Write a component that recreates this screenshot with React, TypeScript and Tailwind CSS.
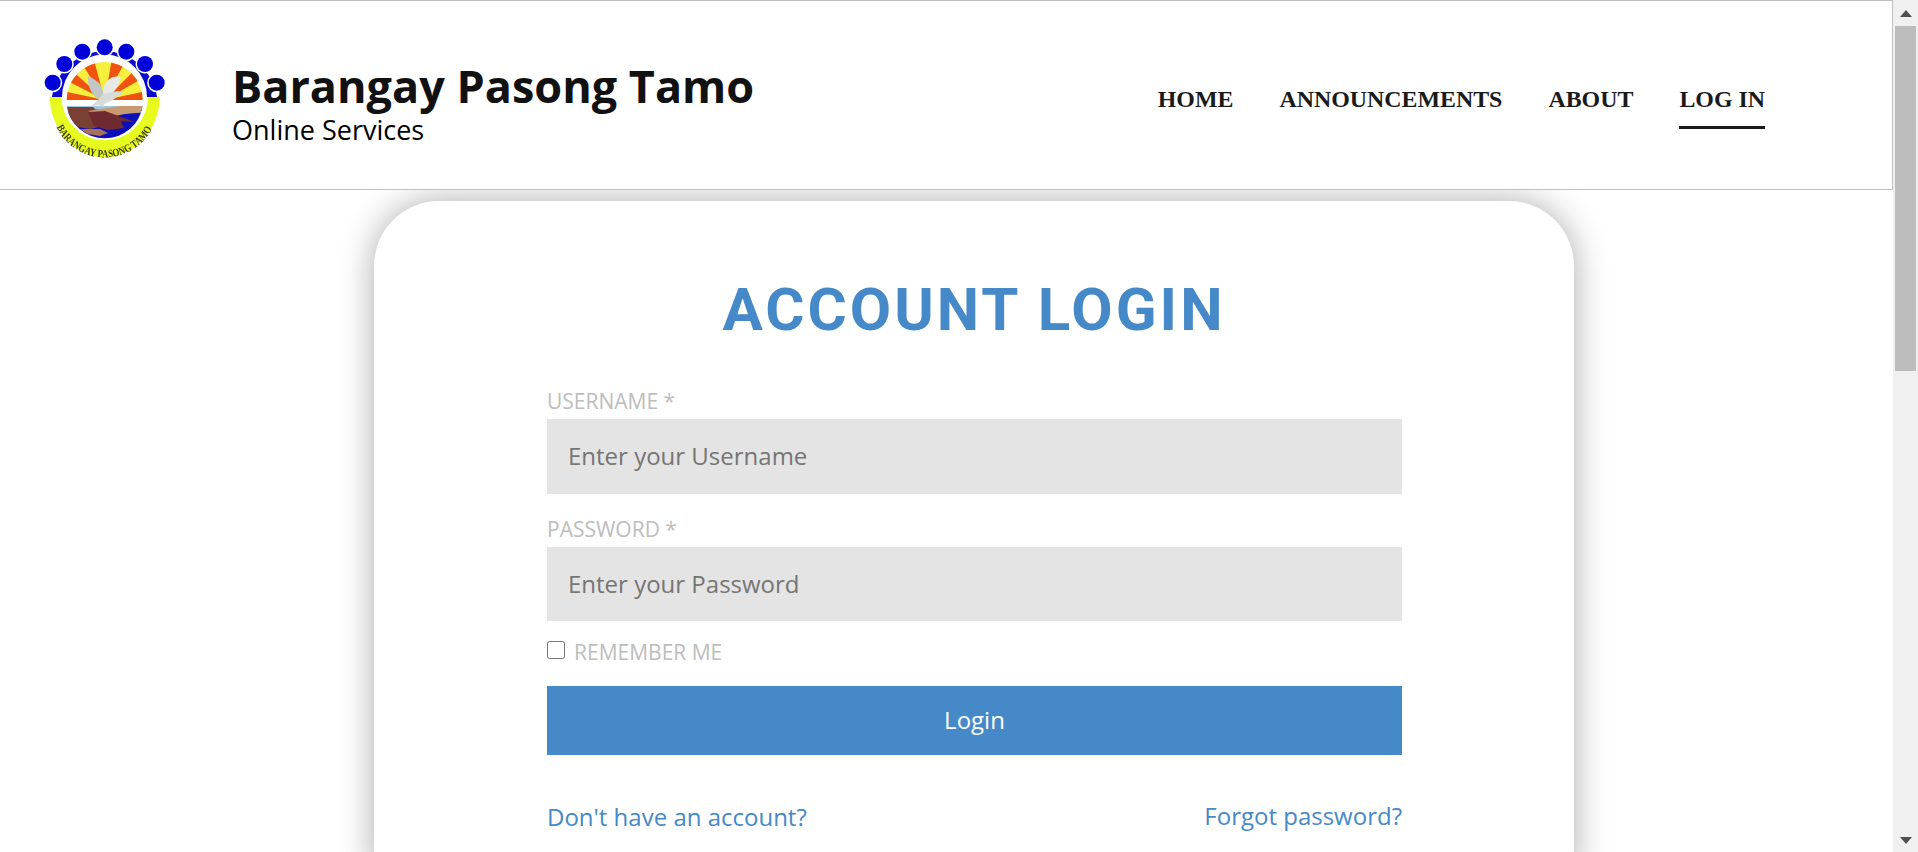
const navItems = ["HOME", "ANNOUNCEMENTS", "ABOUT", "LOG IN"];

// orange wedges of the sunburst, degrees measured from the left horizon
const wedges = [
  [0, 12],
  [27, 42],
  [58, 75],
  [100, 118],
  [135, 150],
  [168, 180],
];

function wedgePath(from: number, to: number) {
  const point = (deg: number) => {
    const rad = (deg * Math.PI) / 180;
    return `${104.7 - 50 * Math.cos(rad)} ${100 - 50 * Math.sin(rad)}`;
  };
  return `M104.7 100 L${point(from)} L${point(to)} Z`;
}

function Logo() {
  const balls = [
    [52.7, 82.7],
    [64.3, 64],
    [82.3, 51.7],
    [104.7, 47.3],
    [126.3, 51.7],
    [145, 64],
    [156.7, 82.7],
  ];
  return (
    <svg viewBox="40 36 130 130" className="mt-[12px] h-[130px] w-[130px] shrink-0 blur-[0.4px]">
      <defs>
        <clipPath id="logo-top">
          <path d="M66.7 100 A38 38 0 0 1 142.7 100 Z" />
        </clipPath>
        <clipPath id="logo-bottom">
          <path d="M67 106 H142.4 A38 37 0 0 1 67 106 Z" />
        </clipPath>
        <path id="logo-arc" d="M56.5 127 A53.5 53.5 0 0 0 153 127" />
      </defs>
      <path d="M52 97 A53 53 0 0 1 157 97 L147 97 A42 42 0 0 0 62 97 Z" fill="#0b0bd0" />
      {balls.map(([cx, cy]) => (
        <circle key={cx} cx={cx} cy={cy} r="9.5" fill="#fff" />
      ))}
      {balls.map(([cx, cy]) => (
        <circle key={cx} cx={cx} cy={cy} r="8" fill="#0000d8" />
      ))}
      <path d="M49.5 97 L61.5 97 A43 43 0 0 0 148 97 L160 97 A55.3 63 0 0 1 49.5 97 Z" fill="#e8fb1e" />
      <g clipPath="url(#logo-top)">
        <rect x="60" y="60" width="90" height="42" fill="#f6ef3c" />
        {wedges.map(([from, to]) => (
          <path key={from} d={wedgePath(from, to)} fill="#f0530f" />
        ))}
      </g>
      <g clipPath="url(#logo-bottom)">
        <rect x="60" y="106" width="90" height="40" fill="#0d10b8" />
        <rect x="60" y="106" width="90" height="3" fill="#9cc8e8" />
        <rect x="60" y="109" width="90" height="4" fill="#4a80cc" />
        <path d="M60 107 L93 107 L100 114 L104 126 L90 129 L78 127 L66 118 Z" fill="#7a4034" />
        <path d="M146 106 L120 106 L100 109 L88 111 L105 118 L125 114 L146 112 Z" fill="#c99a72" />
        <path d="M88 112 L105 111 L135 122 L121 121 L124 128 L108 130 L94 126 Z" fill="#6e2a30" />
        <path d="M80 129 L100 129 L108 133 L100 136 L88 134 Z" fill="#a8705c" />
      </g>
      <path d="M88 77 C90 76 95 80 100 84 L105 96 L97 99 C92 94 87 86 88 77 Z" fill="#c2c7c5" />
      <path d="M121 77 C114 75 108 78 104 86 L103 96 L110 95 C116 90 120 84 121 77 Z" fill="#e8eae8" />
      <path d="M90 107 L98 100 L103 94 L112 92 L118 91 L124 93 L118 96 C112 101 107 103 104 104 L104 107 L98 105 Z" fill="#d8dbd8" />
      <text fontFamily="'Liberation Serif', serif" fontWeight="700" fontSize="11" fill="#3b3b10">
        <textPath href="#logo-arc" textLength="118" lengthAdjust="spacingAndGlyphs">
          BARANGAY PASONG TAMO
        </textPath>
      </text>
    </svg>
  );
}

function Header() {
  return (
    <header className="relative z-10 flex h-[190px] shrink-0 items-center border-t border-r border-b border-[#c0c0c0] bg-white pr-[127px] pl-[40px]">
      <Logo />
      <div className="ml-[62px] flex-1 pt-[18px] font-['Open_Sans',sans-serif] text-[#111]">
        <h1 className="text-[45px] leading-[51px] font-bold">Barangay Pasong Tamo</h1>
        <p className="text-[27px] leading-[37px] text-black">Online Services</p>
      </div>
      <nav className="flex gap-[46px] self-start pt-[82px] font-['Liberation_Serif',serif] text-[23.9px] leading-[32px] font-bold text-[#1a1a1a]">
        {navItems.map((item) => (
          <a
            key={item}
            href="#"
            className={item === "LOG IN" ? "border-b-[3px] border-[#1a1a1a] pb-[11px]" : "pb-[14px]"}
          >
            {item}
          </a>
        ))}
      </nav>
    </header>
  );
}

function LoginCard() {
  return (
    <section className="mt-[11px] ml-[374px] w-[1200px] shrink-0 rounded-t-[65px] bg-white pt-[69px] pb-[40px] font-['Open_Sans',sans-serif] shadow-[0_0_35px_rgba(0,0,0,0.33)]">
      <h2 className="text-center font-['Roboto',sans-serif] text-[60px] leading-[80px] font-bold tracking-[3px] text-[#4689c8]">
        ACCOUNT LOGIN
      </h2>
      <form className="mt-[33px] ml-[173px] flex w-[855px] flex-col">
        <label className="text-[21px] leading-[36px] text-[#bdbdbd]">USERNAME *</label>
        <input
          type="text"
          placeholder="Enter your Username"
          className="h-[75px] bg-[#e4e4e4] px-[21px] pb-[2px] text-[24px] outline-none placeholder:text-[#757575]"
        />
        <label className="mt-[17px] text-[21px] leading-[36px] text-[#bdbdbd]">PASSWORD *</label>
        <input
          type="password"
          placeholder="Enter your Password"
          className="h-[74px] bg-[#e4e4e4] px-[21px] pb-[2px] text-[24px] outline-none placeholder:text-[#757575]"
        />
        <div className="mt-[20px] flex items-start">
          <input type="checkbox" className="h-[18px] w-[18px]" />
          <span className="ml-[9px] text-[21px] leading-[22px] text-[#bdbdbd]">REMEMBER ME</span>
        </div>
        <button type="button" className="mt-[23px] h-[69px] bg-[#4689c8] pb-[2px] text-[24px] text-white">
          Login
        </button>
        <div className="mt-[46px] flex justify-between text-[24px] leading-[32px] text-[#4689c8]">
          <a href="#">Don't have an account?</a>
          <a href="#" className="-mt-[1px]">Forgot password?</a>
        </div>
      </form>
    </section>
  );
}

function Scrollbar() {
  return (
    <div className="flex h-full w-[25px] shrink-0 flex-col items-center bg-[#f0f0f0] pt-[10px] pb-[8px]">
      <div className="h-0 w-0 border-x-[6px] border-b-[7px] border-x-transparent border-b-[#505050]" />
      <div className="mt-[9px] h-[345px] w-[21px] bg-[#bdbdbd]" />
      <div className="flex-1" />
      <div className="h-0 w-0 border-x-[6px] border-t-[7px] border-x-transparent border-t-[#505050]" />
    </div>
  );
}

export default function App() {
  return (
    <div className="flex h-[852px] w-full overflow-hidden bg-white">
      <main className="flex min-w-0 flex-1 flex-col overflow-hidden">
        <Header />
        <LoginCard />
      </main>
      <Scrollbar />
    </div>
  );
}
